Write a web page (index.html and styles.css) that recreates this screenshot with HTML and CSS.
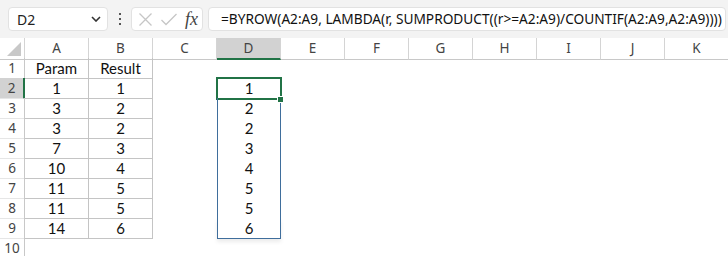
FILE: index.html
```html
<!DOCTYPE HTML>
<html>
<head>
	<title>BYROW rank</title>
	<meta http-equiv="Content-Type" content="text/html; charset=UTF-8">
	<link rel="stylesheet" href="styles.css">
</head>
<body>

	<div class="toolbar">
		<div class="namebox">
			<span>D2</span>
			<svg class="chev" width="10" height="6" viewBox="0 0 10 6"><path d="M1 1 L5 5 L9 1" fill="none" stroke="#333" stroke-width="1.6"/></svg>
		</div>
		<div class="dots"><i></i><i></i><i></i></div>
		<div class="fxbox">
			<svg width="15" height="15" viewBox="0 0 15 15"><path d="M1.5 1.5 L13.5 13.5 M13.5 1.5 L1.5 13.5" stroke="#c6c6c6" stroke-width="1.3" fill="none"/></svg>
			<svg width="18" height="15" viewBox="0 0 18 15"><path d="M1.5 8 L6 12.5 L16.5 2" stroke="#c6c6c6" stroke-width="1.3" fill="none"/></svg>
			<span class="fx">fx</span>
		</div>
		<div class="formula">=BYROW(A2:A9, LAMBDA(r, SUMPRODUCT((r&gt;=A2:A9)/COUNTIF(A2:A9,A2:A9))))</div>
	</div>

	<div class="sheet">
		<div class="row head">
			<div class="corner"><svg width="14" height="14" viewBox="0 0 14 14"><path d="M14 0 L14 14 L0 14 Z" fill="#c8c8c8"/></svg></div>
			<div class="ch">A</div><div class="ch">B</div><div class="ch">C</div><div class="ch on">D</div>
			<div class="ch">E</div><div class="ch">F</div><div class="ch">G</div><div class="ch">H</div>
			<div class="ch">I</div><div class="ch">J</div><div class="ch">K</div>
		</div>
		<div class="row"><div class="rh">1</div><div class="c t">Param</div><div class="c t">Result</div></div>
		<div class="row"><div class="rh on">2</div><div class="c t">1</div><div class="c t">1</div><div class="c"></div><div class="c sp sel">1</div></div>
		<div class="row"><div class="rh">3</div><div class="c t">3</div><div class="c t">2</div><div class="c"></div><div class="c sp">2</div></div>
		<div class="row"><div class="rh">4</div><div class="c t">3</div><div class="c t">2</div><div class="c"></div><div class="c sp">2</div></div>
		<div class="row"><div class="rh">5</div><div class="c t">7</div><div class="c t">3</div><div class="c"></div><div class="c sp">3</div></div>
		<div class="row"><div class="rh">6</div><div class="c t">10</div><div class="c t">4</div><div class="c"></div><div class="c sp">4</div></div>
		<div class="row"><div class="rh">7</div><div class="c t">11</div><div class="c t">5</div><div class="c"></div><div class="c sp">5</div></div>
		<div class="row"><div class="rh">8</div><div class="c t">11</div><div class="c t">5</div><div class="c"></div><div class="c sp">5</div></div>
		<div class="row"><div class="rh">9</div><div class="c t">14</div><div class="c t">6</div><div class="c"></div><div class="c sp last">6</div></div>
		<div class="row"><div class="rh">10</div></div>
	</div>

</body>
</html>
```

FILE: styles.css
```css
body {
	margin: 0;
	background: #ffffff;
	font-family: "Noto Sans", "Open Sans", sans-serif;
	overflow: hidden;
}

div.toolbar {
	display: flex;
	align-items: center;
	height: 38px;
	box-sizing: border-box;
	padding: 7px 2px 7px 8px;
	background: #f3f3f3;
}

.namebox, .fxbox, .formula {
	height: 24px;
	box-sizing: border-box;
	background: #ffffff;
	border: 1px solid #e2e2e2;
	border-radius: 4px;
}

.namebox {
	width: 100px;
	display: flex;
	align-items: center;
	justify-content: space-between;
	padding: 0 6px 0 8px;
	font-size: 14px;
	color: #222;
}

.dots {
	width: 23px;
	display: flex;
	flex-direction: column;
	align-items: center;
	gap: 3px;
}

.dots i {
	width: 2px;
	height: 2px;
	background: #555;
}

.fxbox {
	width: 72px;
	display: flex;
	align-items: center;
	padding-left: 6px;
	gap: 7px;
}

.fx {
	font-family: "Liberation Serif", serif;
	font-style: italic;
	font-size: 18px;
	line-height: 20px;
	color: #444;
}

.formula {
	flex: 1;
	margin-left: 5px;
	padding-left: 12px;
	font-size: 13.7px;
	line-height: 22px;
	color: #111;
	white-space: nowrap;
	overflow: hidden;
}

.sheet {
	font-family: "Lato", "Liberation Sans", sans-serif;
}

.row {
	display: grid;
	grid-template-columns: 25px repeat(11, 64px);
	height: 20px;
}

.row > div {
	box-sizing: border-box;
	line-height: 20px;
	text-align: center;
	position: relative;
}

.head > div {
	font-family: "Noto Sans", "Open Sans", sans-serif;
	font-size: 13.5px;
	color: #444;
	border-right: 1px solid #d4d4d4;
	border-bottom: 1px solid #c8c8c8;
}

.corner svg {
	position: absolute;
	right: 3px;
	bottom: 3px;
}

.ch.on {
	background: #d2d2d2;
	border-bottom: 2px solid #217346;
}

.rh {
	font-family: "Noto Sans", "Open Sans", sans-serif;
	font-size: 13.5px;
	color: #444;
	border-right: 1px solid #c8c8c8;
	border-bottom: 1px solid #e6e6e6;
}

.rh.on {
	background: #d2d2d2;
	border-right: 2px solid #217346;
}

.c {
	font-size: 15px;
	color: #111;
}

.c.t {
	border-right: 1px solid #c4c4c4;
	border-bottom: 1px solid #c4c4c4;
}

.c.sp {
	border-left: 1px solid #3f6e9c;
	border-right: 1px solid #3f6e9c;
}

.c.sp.last {
	border-bottom: 1px solid #3f6e9c;
	box-shadow: 0 3px 4px rgba(0, 0, 0, 0.08);
}

.c.sel {
	border-color: transparent;
	outline: 2px solid #217346;
	outline-offset: -1px;
}

.c.sel::after {
	content: "";
	position: absolute;
	right: -4px;
	bottom: -4px;
	width: 5px;
	height: 5px;
	background: #217346;
	border: 1px solid #ffffff;
	z-index: 2;
}
```
